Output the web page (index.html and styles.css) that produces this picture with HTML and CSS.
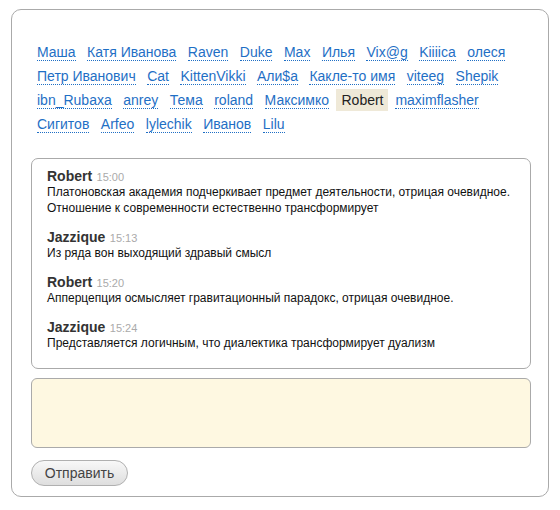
FILE: index.html
```html
<!DOCTYPE html>
<html lang="ru">
<head>
<meta charset="utf-8">
<title>Chat</title>
<link rel="stylesheet" href="styles.css">
</head>
<body>
<div class="chat">
  <div class="users">
    <a class="user">Маша</a> <a class="user">Катя Иванова</a> <a class="user">Raven</a> <a class="user">Duke</a> <a class="user">Max</a> <a class="user">Илья</a> <a class="user">Vix@g</a> <a class="user">Kiiiica</a> <a class="user">олеся</a>
    <a class="user">Петр Иванович</a> <a class="user">Cat</a> <a class="user">KittenVikki</a> <a class="user">Али$а</a> <a class="user">Какле-то имя</a> <a class="user">viteeg</a> <a class="user">Shepik</a>
    <a class="user">ibn_Rubaxa</a> <a class="user">anrey</a> <a class="user">Тема</a> <a class="user">roland</a> <a class="user">Максимко</a> <span class="user user-self">Robert</span> <a class="user">maximflasher</a>
    <a class="user">Сигитов</a> <a class="user">Arfeo</a> <a class="user">lylechik</a> <a class="user">Иванов</a> <a class="user">Lilu</a>
  </div>
  <div class="messages">
    <div class="msg">
      <div class="msg-head"><span class="msg-name">Robert</span> <span class="msg-time">15:00</span></div>
      <div class="msg-text">Платоновская академия подчеркивает предмет деятельности, отрицая очевидное. Отношение к современности естественно трансформирует</div>
    </div>
    <div class="msg">
      <div class="msg-head"><span class="msg-name">Jazzique</span> <span class="msg-time">15:13</span></div>
      <div class="msg-text">Из ряда вон выходящий здравый смысл</div>
    </div>
    <div class="msg">
      <div class="msg-head"><span class="msg-name">Robert</span> <span class="msg-time">15:20</span></div>
      <div class="msg-text">Апперцепция осмысляет гравитационный парадокс, отрицая очевидное.</div>
    </div>
    <div class="msg">
      <div class="msg-head"><span class="msg-name">Jazzique</span> <span class="msg-time">15:24</span></div>
      <div class="msg-text">Представляется логичным, что диалектика трансформирует дуализм</div>
    </div>
  </div>
  <textarea class="input"></textarea>
  <button class="send">Отправить</button>
</div>
</body>
</html>
```
FILE: styles.css
```css
html, body {
  margin: 0;
  background: #fff;
}
body {
  padding: 9px 11px 0 11px;
  font-family: "Liberation Sans", Arial, sans-serif;
}
.chat {
  box-sizing: border-box;
  width: 538px;
  height: 488px;
  border: 1px solid #aaa;
  border-radius: 10px;
  padding: 0 18px 0 19px;
}
.users {
  padding: 30px 6px 0 6px;
  font-size: 14px;
  line-height: 24px;
  height: 94px;
}
.user {
  color: #1f6fc5;
  text-decoration: none;
  border-bottom: 1px dotted #1f6fc5;
  margin-right: 7.6px;
  cursor: pointer;
}
.user-self {
  color: #222;
  border-bottom: none;
  background: #efe9d8;
  padding: 3px 4px 3px 5px;
  margin-left: -4px;
  margin-right: 4px;
}
.messages {
  box-sizing: border-box;
  margin-top: 24px;
  width: 500px;
  height: 211px;
  border: 1px solid #aaa;
  border-radius: 7px;
  padding: 9px 14px 0 15px;
}
.msg {
  margin-bottom: 13px;
}
.msg-head {
  line-height: 16px;
  height: 16px;
}
.msg-name {
  font-size: 14px;
  font-weight: bold;
  color: #333;
}
.msg-time {
  font-size: 11px;
  color: #aaa;
}
.msg-text {
  font-size: 12px;
  line-height: 16px;
  color: #111;
}
.input {
  display: block;
  box-sizing: border-box;
  margin: 9px 0 0 0;
  width: 500px;
  height: 70px;
  border: 1px solid #aaa;
  border-radius: 6px;
  background: #fef8e1;
  resize: none;
  outline: none;
}
.send {
  display: block;
  margin-top: 12px;
  width: 97px;
  height: 26px;
  border: 1px solid #b0b0b0;
  border-radius: 13px;
  background: linear-gradient(#f8f8f8, #dedede);
  font-family: "Liberation Sans", Arial, sans-serif;
  font-size: 14px;
  color: #444;
  padding: 0;
}
```
